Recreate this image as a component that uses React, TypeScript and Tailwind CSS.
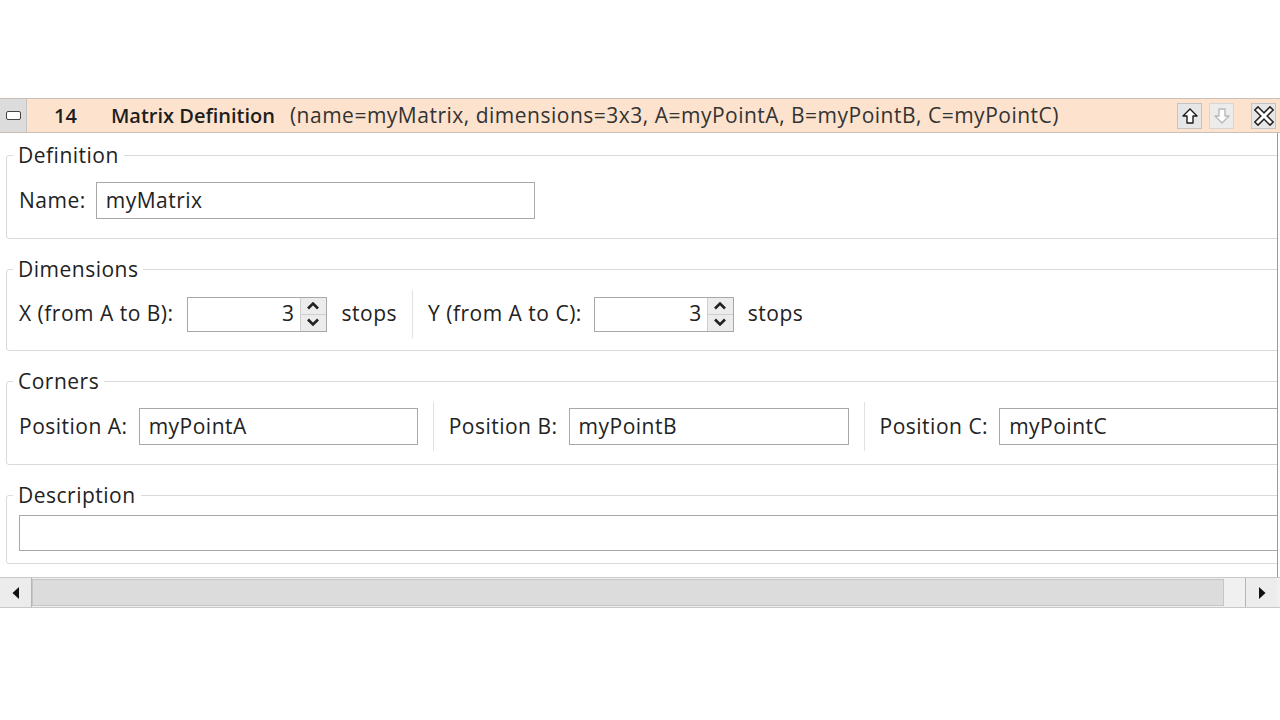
import React from "react";

const font = { fontFamily: '"Open Sans", "Noto Sans", sans-serif' };

function ArrowUp({ dim }: { dim?: boolean }) {
  return (
    <svg width="18" height="18" viewBox="0 0 18 18">
      <path
        d="M9 2 L16 9 L12 9 L12 16 L6 16 L6 9 L2 9 Z"
        fill="#fff"
        stroke={dim ? "#b8b8b8" : "#1a1a1a"}
        strokeWidth="1.4"
        strokeLinejoin="round"
      />
    </svg>
  );
}

function ArrowDown({ dim }: { dim?: boolean }) {
  return (
    <svg width="18" height="18" viewBox="0 0 18 18">
      <path
        d="M9 16 L16 9 L12 9 L12 2 L6 2 L6 9 L2 9 Z"
        fill="#fff"
        stroke={dim ? "#b8b8b8" : "#1a1a1a"}
        strokeWidth="1.4"
        strokeLinejoin="round"
      />
    </svg>
  );
}

function CloseIcon() {
  return (
    <svg width="20" height="20" viewBox="0 0 20 20">
      <path d="M4 4 L16 16 M16 4 L4 16" stroke="#222" strokeWidth="6" strokeLinecap="square" />
      <path d="M4 4 L16 16 M16 4 L4 16" stroke="#fff" strokeWidth="3" strokeLinecap="square" />
    </svg>
  );
}

function HeaderButton({ children, dim }: { children: React.ReactNode; dim?: boolean }) {
  return (
    <div
      className={`w-[25px] h-[26px] flex items-center justify-center border ${
        dim ? "border-[#d6d6d6] bg-[#ececec]" : "border-[#c4c4c4] bg-[#e6e6e6]"
      }`}
    >
      {children}
    </div>
  );
}

function Group({
  title,
  children,
  pad = "pt-[15px] pb-[19px]",
}: {
  title: string;
  children: React.ReactNode;
  pad?: string;
}) {
  return (
    <fieldset className={`border border-[#dadada] rounded-[3px] ml-[6px] mr-[-40px] pl-[12px] pr-[12px] ${pad}`}>
      <legend className="px-[5px] ml-[-6px] text-[#222] leading-[24px]">{title}</legend>
      {children}
    </fieldset>
  );
}

function Label({ text, gap = "mr-[11px]" }: { text: string; gap?: string }) {
  return <span className={`shrink-0 whitespace-nowrap text-[#222] ${gap}`}>{text}</span>;
}

function TextBox({ value, className }: { value: string; className: string }) {
  return (
    <div
      className={`shrink-0 border border-[#a8a8a8] bg-white px-[9px] flex items-center text-[#222] ${className}`}
    >
      {value}
    </div>
  );
}

function Spinner({ value }: { value: string }) {
  return (
    <div className="shrink-0 w-[140px] h-[35px] border border-[#a8a8a8] bg-white flex">
      <div className="flex-1 flex items-center justify-end pr-[5px] text-[#222]">{value}</div>
      <div className="w-[26px] flex flex-col border-l border-[#cfcfcf] bg-[#ececec]">
        <div className="flex-1 flex items-center justify-center border-b border-[#cfcfcf]">
          <svg width="14" height="9" viewBox="0 0 14 9">
            <path d="M2 7.5 L7 2.5 L12 7.5" fill="none" stroke="#222" strokeWidth="2.6" />
          </svg>
        </div>
        <div className="flex-1 flex items-center justify-center">
          <svg width="14" height="9" viewBox="0 0 14 9">
            <path d="M2 1.5 L7 6.5 L12 1.5" fill="none" stroke="#222" strokeWidth="2.6" />
          </svg>
        </div>
      </div>
    </div>
  );
}

function Divider() {
  return <div className="shrink-0 w-px self-stretch bg-[#e2e2e2] mx-[15px] my-[-6px]" />;
}

export default function App() {
  return (
    <div className="w-[1280px] h-[720px] bg-white overflow-hidden text-[21px] tracking-[0.5px]" style={font}>
      <div className="h-[98px]" />

      {/* Block header */}
      <div className="h-[35px] flex items-center bg-[#fde3cd] border-t border-b border-[#c9bfb6] whitespace-nowrap">
        <div className="w-[27px] h-full flex items-center justify-center bg-[#dcdcdc] border-r border-[#c4c4c4]">
          <div className="w-[15px] h-[9px] rounded-[2px] border-[1.5px] border-[#444] bg-white" />
        </div>
        <span className="ml-[27px] font-semibold text-[20px] tracking-normal text-[#1e1e1e]">14</span>
        <span className="ml-[34px] font-semibold text-[20px] tracking-normal text-[#1e1e1e]">Matrix Definition</span>
        <span className="ml-[15px] text-[#333]">
          (name=myMatrix, dimensions=3x3, A=myPointA, B=myPointB, C=myPointC)
        </span>
        <div className="ml-auto flex items-center mr-[4px]">
          <HeaderButton>
            <ArrowUp />
          </HeaderButton>
          <div className="w-[7px]" />
          <HeaderButton dim>
            <ArrowDown dim />
          </HeaderButton>
          <div className="w-[17px]" />
          <HeaderButton>
            <CloseIcon />
          </HeaderButton>
        </div>
      </div>

      {/* Block body */}
      <div className="w-[1278px] border-r border-[#9a9a9a] overflow-hidden pt-[10px] pb-[13px] flex flex-col gap-[18px]">
        <Group title="Definition">
          <div className="flex items-center">
            <Label text="Name:" gap="mr-[10px]" />
            <TextBox value="myMatrix" className="w-[439px] h-[37px]" />
          </div>
        </Group>

        <Group title="Dimensions" pad="pt-[15px] pb-[18px]">
          <div className="flex items-center h-[36px]">
            <Label text="X (from A to B):" gap="mr-[13px]" />
            <Spinner value="3" />
            <Label text="stops" gap="ml-[15px]" />
            <Divider />
            <Label text="Y (from A to C):" gap="mr-[12px]" />
            <Spinner value="3" />
            <Label text="stops" gap="ml-[14px]" />
          </div>
        </Group>

        <Group title="Corners">
          <div className="flex items-center">
            <Label text="Position A:" />
            <TextBox value="myPointA" className="w-[279px] h-[37px]" />
            <Divider />
            <Label text="Position B:" />
            <TextBox value="myPointB" className="w-[280px] h-[37px]" />
            <Divider />
            <Label text="Position C:" />
            <TextBox value="myPointC" className="w-[320px] h-[37px]" />
          </div>
        </Group>

        <Group title="Description" pad="pt-[8px] pb-[12px]">
          <TextBox value="" className="w-[1300px] h-[36px]" />
        </Group>
      </div>

      {/* Horizontal scrollbar */}
      <div className="h-[31px] flex border-t border-b border-[#c8c8c8] bg-[#f0f0f0]">
        <div className="w-[32px] flex items-center justify-center border-r border-[#b5b5b5] bg-[#ececec]">
          <svg width="8" height="12" viewBox="0 0 8 12">
            <path d="M7 0 L0.5 6 L7 12 Z" fill="#111" />
          </svg>
        </div>
        <div className="w-[1192px] my-[1px] bg-[#dcdcdc] border border-[#c6c6c6]" />
        <div className="flex-1" />
        <div className="w-[32px] mr-[3px] flex items-center justify-center border-l border-[#b5b5b5] bg-[#ececec]">
          <svg width="8" height="12" viewBox="0 0 8 12">
            <path d="M1 0 L7.5 6 L1 12 Z" fill="#111" />
          </svg>
        </div>
      </div>
    </div>
  );
}
